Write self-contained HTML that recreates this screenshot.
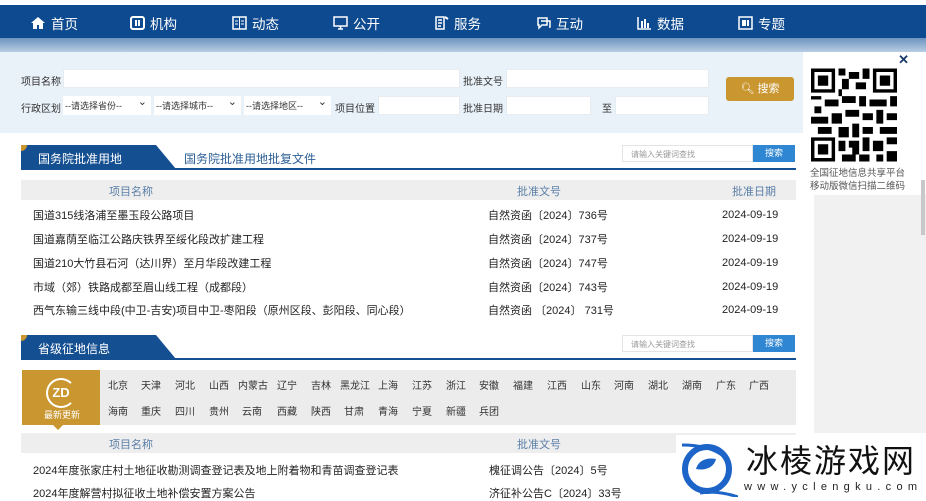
<!DOCTYPE html>
<html><head><meta charset="utf-8"><style>
*{margin:0;padding:0;box-sizing:border-box}
body{width:926px;height:500px;overflow:hidden;background:#fff;font-family:"Liberation Sans","Noto Sans CJK SC",sans-serif;position:relative;font-size:11px;color:#333}
.a{position:absolute}
.nav{left:0;top:5px;width:926px;height:33px;background:#0e4a8f}
.nav div{position:absolute;top:8px;color:#fff;font-size:13.5px;display:flex;align-items:center;gap:5px}
.band{left:0;top:38px;width:926px;height:14px;background:linear-gradient(#6d93bf,#b8cde3)}
.srch{left:0;top:52px;width:814px;height:81px;background:#e9f1f9}
.inp{position:absolute;background:#fff;height:19px;border:1px solid #e6ecf2}
.lbl{position:absolute;font-size:10px;color:#333}
.sel{position:absolute;background:#fff;height:19px;font-size:9px;color:#333;padding:3px 2px}
.sel:after{content:"⌄";position:absolute;right:4px;top:-1px;font-size:11px}
.row{position:absolute;left:33px;font-size:11px;color:#222}
.dt{left:722px}
.hdr{position:absolute;left:21px;width:775px;height:20px;background:#eeeeee;color:#5a7fa8;font-size:11px}
.prov span{position:absolute;font-size:10px;color:#333}
</style></head><body>
<div class="a nav">
<div style="left:30px"><svg width="16" height="14"><path d="M8 1L1 7h2v6h4V9h2v4h4V7h2z" fill="#fff"/></svg>首页</div>
<div style="left:130px"><svg width="15" height="14"><rect x="1" y="1" width="13" height="12" rx="2" fill="none" stroke="#fff" stroke-width="2"/><path d="M6 4v6M9 4v6" stroke="#fff" stroke-width="2"/></svg>机构</div>
<div style="left:232px"><svg width="15" height="14"><rect x="1" y="1" width="13" height="12" fill="none" stroke="#fff" stroke-width="1.5"/><path d="M7.5 1v12M3 5h3M3 8h3M9 5h3M9 8h3" stroke="#fff"/></svg>动态</div>
<div style="left:333px"><svg width="15" height="14"><rect x="1" y="1" width="13" height="9" fill="none" stroke="#fff" stroke-width="1.5"/><path d="M5 13h5M7.5 10v3" stroke="#fff" stroke-width="1.5"/></svg>公开</div>
<div style="left:434px"><svg width="15" height="14"><path d="M2 1h8v12H2zM4 4h4M4 7h4M4 10h3" fill="none" stroke="#fff" stroke-width="1.5"/><path d="M11 1l3 2" stroke="#fff" stroke-width="2"/></svg>服务</div>
<div style="left:536px"><svg width="15" height="14"><path d="M2 2h9v7H6l-3 3V9H2z" fill="none" stroke="#fff" stroke-width="1.5"/><path d="M5 5h9v6h-1" fill="none" stroke="#fff" stroke-width="1.5"/></svg>互动</div>
<div style="left:637px"><svg width="15" height="14"><path d="M1 1v12h13" fill="none" stroke="#fff" stroke-width="1.5"/><path d="M5 5v7M8 3v9M11 7v5" stroke="#fff" stroke-width="2"/></svg>数据</div>
<div style="left:738px"><svg width="15" height="14"><rect x="1" y="1" width="13" height="12" fill="none" stroke="#fff" stroke-width="1.5"/><path d="M4 4h4v6H4z" fill="#fff"/><path d="M10 4v6" stroke="#fff" stroke-width="2"/></svg>专题</div>
</div>
<div class="a band"></div>
<div class="a srch">
<span class="lbl" style="left:21px;top:21px">项目名称</span><div class="inp" style="left:63px;top:17px;width:397px"></div>
<span class="lbl" style="left:463px;top:21px">批准文号</span><div class="inp" style="left:506px;top:17px;width:203px"></div>
<span class="lbl" style="left:21px;top:48px">行政区划</span>
<div class="sel" style="left:63px;top:44px;width:88px">--请选择省份--</div>
<div class="sel" style="left:154px;top:44px;width:87px">--请选择城市--</div>
<div class="sel" style="left:244px;top:44px;width:87px">--请选择地区--</div>
<span class="lbl" style="left:335px;top:48px">项目位置</span><div class="inp" style="left:378px;top:44px;width:82px"></div>
<span class="lbl" style="left:463px;top:48px">批准日期</span><div class="inp" style="left:506px;top:44px;width:85px"></div>
<span class="lbl" style="left:602px;top:48px">至</span><div class="inp" style="left:615px;top:44px;width:94px"></div>
<div style="position:absolute;left:726px;top:25px;width:68px;height:24px;background:#c9962f;border-radius:3px;color:#fff;font-size:11px;text-align:center;line-height:24px">🔍︎ 搜索</div>
</div>
<div class="a" style="left:814px;top:195px;width:112px;height:238px;background:#f1f1f1"></div>
<div class="a" style="left:921px;top:180px;width:4px;height:55px;background:#c8c8c8"></div>
<div class="a" style="left:803px;top:52px;width:109px;height:143px;background:#fff">
<div style="position:absolute;right:3px;top:0;font-size:13px;font-weight:bold;color:#1a3a6a">✕</div>
<svg style="position:absolute;left:8px;top:16px" width="86" height="94" viewBox="0 0 25 27">
<g fill="#000"><path d="M0 0h7v7H0zM18 0h7v7h-7zM0 20h7v7H0z"/></g>
<g fill="#fff"><path d="M1 1h5v5H1zM19 1h5v5h-5zM1 21h5v5H1z"/></g>
<g fill="#000"><path d="M2 2h3v3H2zM20 2h3v3h-3zM2 22h3v3H2z"/>
<path d="M8 0h2v2H8zM11 1h3v2h-3zM9 3h2v3H9zM13 4h3v2h-3zM15 0h2v3h-2zM8 6h1v2H8z"/>
<path d="M0 8h3v1H0zM4 9h4v2H4zM1 11h2v2H1zM9 8h4v2H9zM14 8h2v3h-2zM17 9h5v2h-5zM23 8h2v3h-2z"/>
<path d="M0 14h5v2H0zM6 13h3v3H6zM10 12h4v2h-4zM15 13h3v2h-3zM19 12h2v4h-2zM22 13h3v2h-3z"/>
<path d="M2 17h4v2H2zM8 17h3v3H8zM12 16h2v4h-2zM15 17h3v2h-3zM20 17h5v2h-5z"/>
<path d="M8 21h2v3H8zM11 21h3v2h-3zM15 20h2v4h-2zM18 21h3v3h-3zM22 20h3v2h-3zM9 25h4v2H9zM14 25h3v2h-3zM19 25h2v2h-2zM22 24h3v3h-3zM12 23h2v2h-2z"/></g></svg>
<div style="position:absolute;left:7px;top:115px;font-size:9.5px;color:#555;line-height:13px;white-space:nowrap">全国征地信息共享平台<br>移动版微信扫描二维码</div>
</div>

<div class="a" style="left:21px;top:145px;width:155px;height:24px;background:#144f91;clip-path:polygon(0 0,135px 0,155px 24px,0 24px)"></div>
<div class="a" style="left:21px;top:145px;width:6px;height:6px;background:#c9962f;border-radius:0 0 6px 0"></div>
<div class="a" style="left:38px;top:150px;color:#fff;font-size:12px">国务院批准用地</div>
<div class="a" style="left:184px;top:150px;color:#2d5f96;font-size:12px">国务院批准用地批复文件</div>
<div class="a" style="left:21px;top:168px;width:775px;height:2px;background:#144f91"></div>
<div class="a" style="left:622px;top:145px;width:131px;height:17px;background:#fff;border:1px solid #e4e4e4;font-size:8px;color:#999;padding:3px 8px">请输入关键词查找</div>
<div class="a" style="left:753px;top:145px;width:42px;height:17px;background:#2f86d2;color:#fff;font-size:9px;text-align:center;line-height:17px">搜索</div>
<div class="hdr" style="top:180px"><span class="a" style="left:88px;top:3px">项目名称</span><span class="a" style="left:496px;top:3px">批准文号</span><span class="a" style="left:711px;top:3px">批准日期</span></div>
<div class="row" style="top:207px">国道315线洛浦至墨玉段公路项目</div>
<div class="row" style="top:231px">国道嘉荫至临江公路庆铁界至绥化段改扩建工程</div>
<div class="row" style="top:255px">国道210大竹县石河（达川界）至月华段改建工程</div>
<div class="row" style="top:279px">市域（郊）铁路成都至眉山线工程（成都段）</div>
<div class="row" style="top:302px">西气东输三线中段(中卫-吉安)项目中卫-枣阳段（原州区段、彭阳段、同心段）</div>
<div class="row" style="left:488px;top:207px">自然资函〔2024〕736号</div>
<div class="row" style="left:488px;top:231px">自然资函〔2024〕737号</div>
<div class="row" style="left:488px;top:255px">自然资函〔2024〕747号</div>
<div class="row" style="left:488px;top:279px">自然资函〔2024〕743号</div>
<div class="row" style="left:488px;top:302px">自然资函 〔2024〕 731号</div>
<div class="row dt" style="top:209px">2024-09-19</div>
<div class="row dt" style="top:233px">2024-09-19</div>
<div class="row dt" style="top:257px">2024-09-19</div>
<div class="row dt" style="top:281px">2024-09-19</div>
<div class="row dt" style="top:304px">2024-09-19</div>

<div class="a" style="left:21px;top:335px;width:155px;height:24px;background:#144f91;clip-path:polygon(0 0,135px 0,155px 24px,0 24px)"></div>
<div class="a" style="left:21px;top:335px;width:6px;height:6px;background:#c9962f;border-radius:0 0 6px 0"></div>
<div class="a" style="left:38px;top:340px;color:#fff;font-size:12px">省级征地信息</div>
<div class="a" style="left:21px;top:358px;width:775px;height:2px;background:#144f91"></div>
<div class="a" style="left:622px;top:335px;width:131px;height:17px;background:#fff;border:1px solid #e4e4e4;font-size:8px;color:#999;padding:3px 8px">请输入关键词查找</div>
<div class="a" style="left:753px;top:335px;width:42px;height:17px;background:#2f86d2;color:#fff;font-size:9px;text-align:center;line-height:17px">搜索</div>
<div class="a prov" style="left:22px;top:370px;width:774px;height:55px;background:#ececec">
<div style="position:absolute;left:0;top:0;width:78px;height:55px;background:#c9962f"></div>
<div style="position:absolute;left:31px;top:55px;width:0;height:0;border:5px solid transparent;border-top-color:#c9962f"></div>
<div style="position:absolute;left:24px;top:8px;width:30px;height:30px;border:2px solid #fff;border-radius:50%;border-right-color:transparent;color:#fff;font-weight:bold;font-size:13px;text-align:center;line-height:26px">ZD</div>
<div style="position:absolute;left:22px;top:38px;color:#fff;font-size:9px">最新更新</div>
<span style="left:86px;top:7px">北京</span><span style="left:119px;top:7px">天津</span><span style="left:153px;top:7px">河北</span><span style="left:187px;top:7px">山西</span><span style="left:216px;top:7px">内蒙古</span><span style="left:255px;top:7px">辽宁</span><span style="left:289px;top:7px">吉林</span><span style="left:318px;top:7px">黑龙江</span><span style="left:356px;top:7px">上海</span><span style="left:390px;top:7px">江苏</span><span style="left:424px;top:7px">浙江</span><span style="left:457px;top:7px">安徽</span><span style="left:491px;top:7px">福建</span><span style="left:525px;top:7px">江西</span><span style="left:559px;top:7px">山东</span><span style="left:592px;top:7px">河南</span><span style="left:626px;top:7px">湖北</span><span style="left:660px;top:7px">湖南</span><span style="left:694px;top:7px">广东</span><span style="left:727px;top:7px">广西</span>
<span style="left:86px;top:33px">海南</span><span style="left:119px;top:33px">重庆</span><span style="left:153px;top:33px">四川</span><span style="left:187px;top:33px">贵州</span><span style="left:220px;top:33px">云南</span><span style="left:255px;top:33px">西藏</span><span style="left:289px;top:33px">陕西</span><span style="left:322px;top:33px">甘肃</span><span style="left:356px;top:33px">青海</span><span style="left:390px;top:33px">宁夏</span><span style="left:424px;top:33px">新疆</span><span style="left:457px;top:33px">兵团</span>
</div>
<div class="hdr" style="top:433px"><span class="a" style="left:88px;top:3px">项目名称</span><span class="a" style="left:496px;top:3px">批准文号</span></div>
<div class="row" style="top:462px">2024年度张家庄村土地征收勘测调查登记表及地上附着物和青苗调查登记表</div>
<div class="row" style="top:485px">2024年度解营村拟征收土地补偿安置方案公告</div>
<div class="row" style="left:489px;top:462px">槐征调公告〔2024〕5号</div>
<div class="row" style="left:489px;top:485px">济征补公告C〔2024〕33号</div>

<div class="a" style="left:676px;top:435px;width:250px;height:65px;background:#fff">
<svg style="position:absolute;left:4px;top:6px" width="58" height="56" viewBox="0 0 58 56">
<circle cx="27" cy="28" r="22" fill="none" stroke="#1c64c8" stroke-width="6"/>
<path d="M16 28c2-8 10-12 20-10c-2 8-10 12-20 10z" fill="#1c64c8"/>
<path d="M2 4c15 0 30 3 40 10M20 52c12-2 26 0 38 4" stroke="#1c64c8" stroke-width="3" fill="none"/>
</svg>
<div style="position:absolute;left:70px;top:4px;font-size:32px;color:#111;letter-spacing:2px;font-family:'Noto Sans CJK SC',sans-serif;line-height:40px">冰棱游戏网</div>
<div style="position:absolute;left:68px;top:46px;font-size:11px;color:#222;letter-spacing:5.3px">www.yclengku.com</div>
</div>
</body></html>
